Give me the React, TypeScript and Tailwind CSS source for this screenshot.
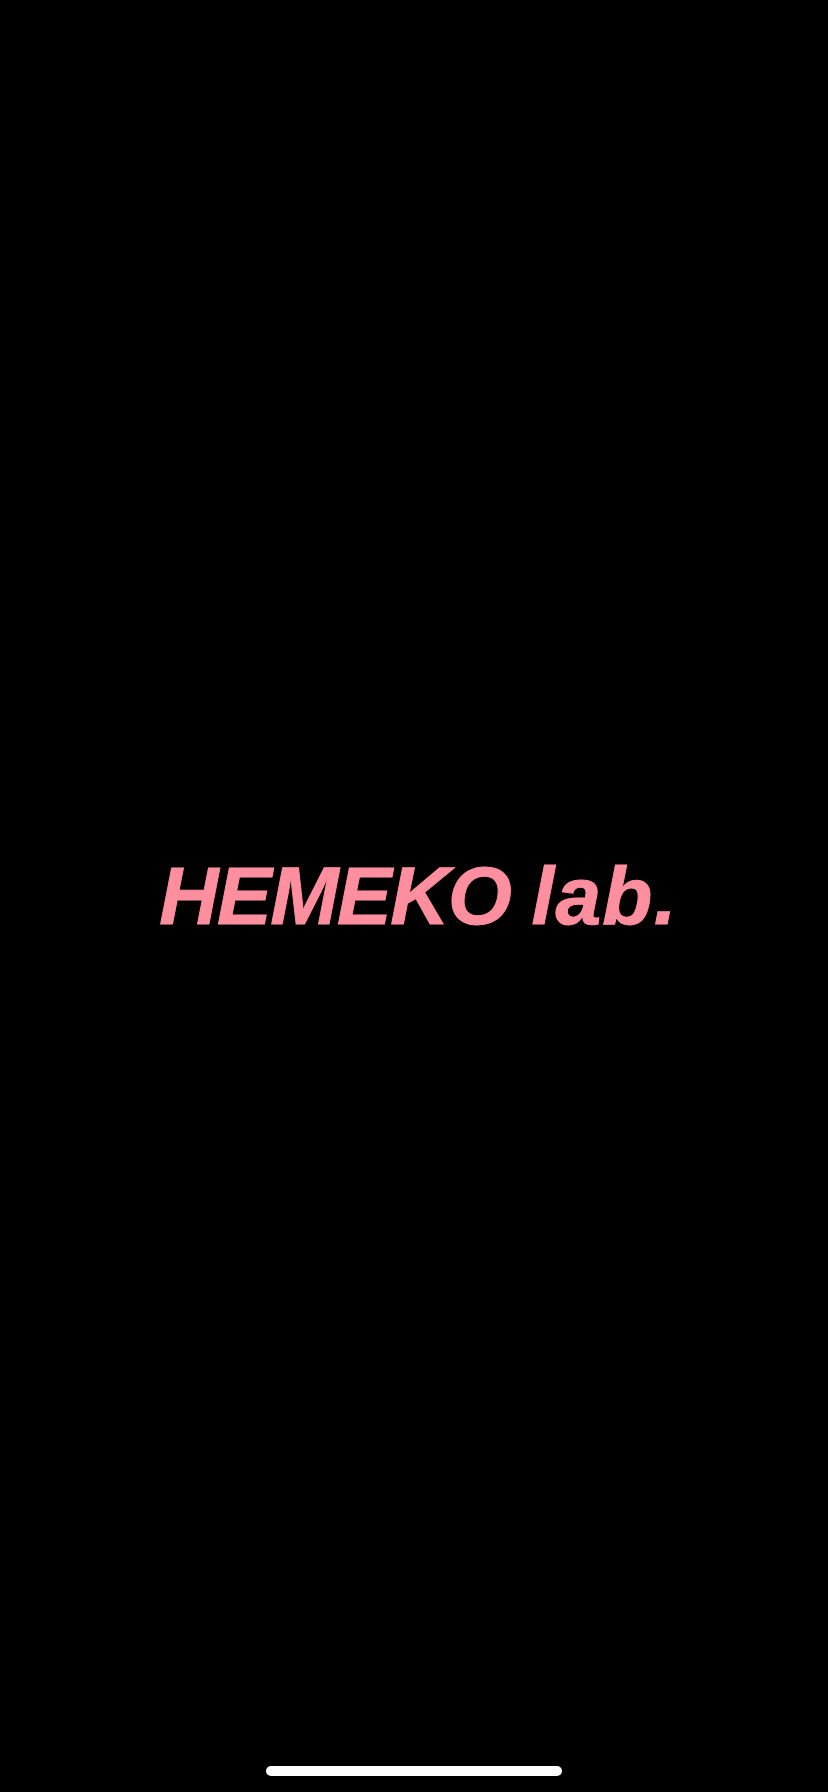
export default function App() {
  return (
    <div className="flex h-[1792px] w-[828px] flex-col bg-black">
      <div className="flex flex-1 items-center justify-center pl-[9px] pt-[34px]">
        <h1 className="font-['Liberation_Sans',Arial,sans-serif] text-[82px] font-bold italic leading-none tracking-[-1.5px] text-[#ff8f9f] [-webkit-text-stroke:1px_#ff8f9f]">
          HEMEKO <span className="tracking-[1.2px]">lab.</span>
        </h1>
      </div>
      {/* home indicator */}
      <div className="flex h-[34px] justify-center">
        <div className="mt-[8px] h-[10px] w-[296px] rounded-full bg-white" />
      </div>
    </div>
  )
}
